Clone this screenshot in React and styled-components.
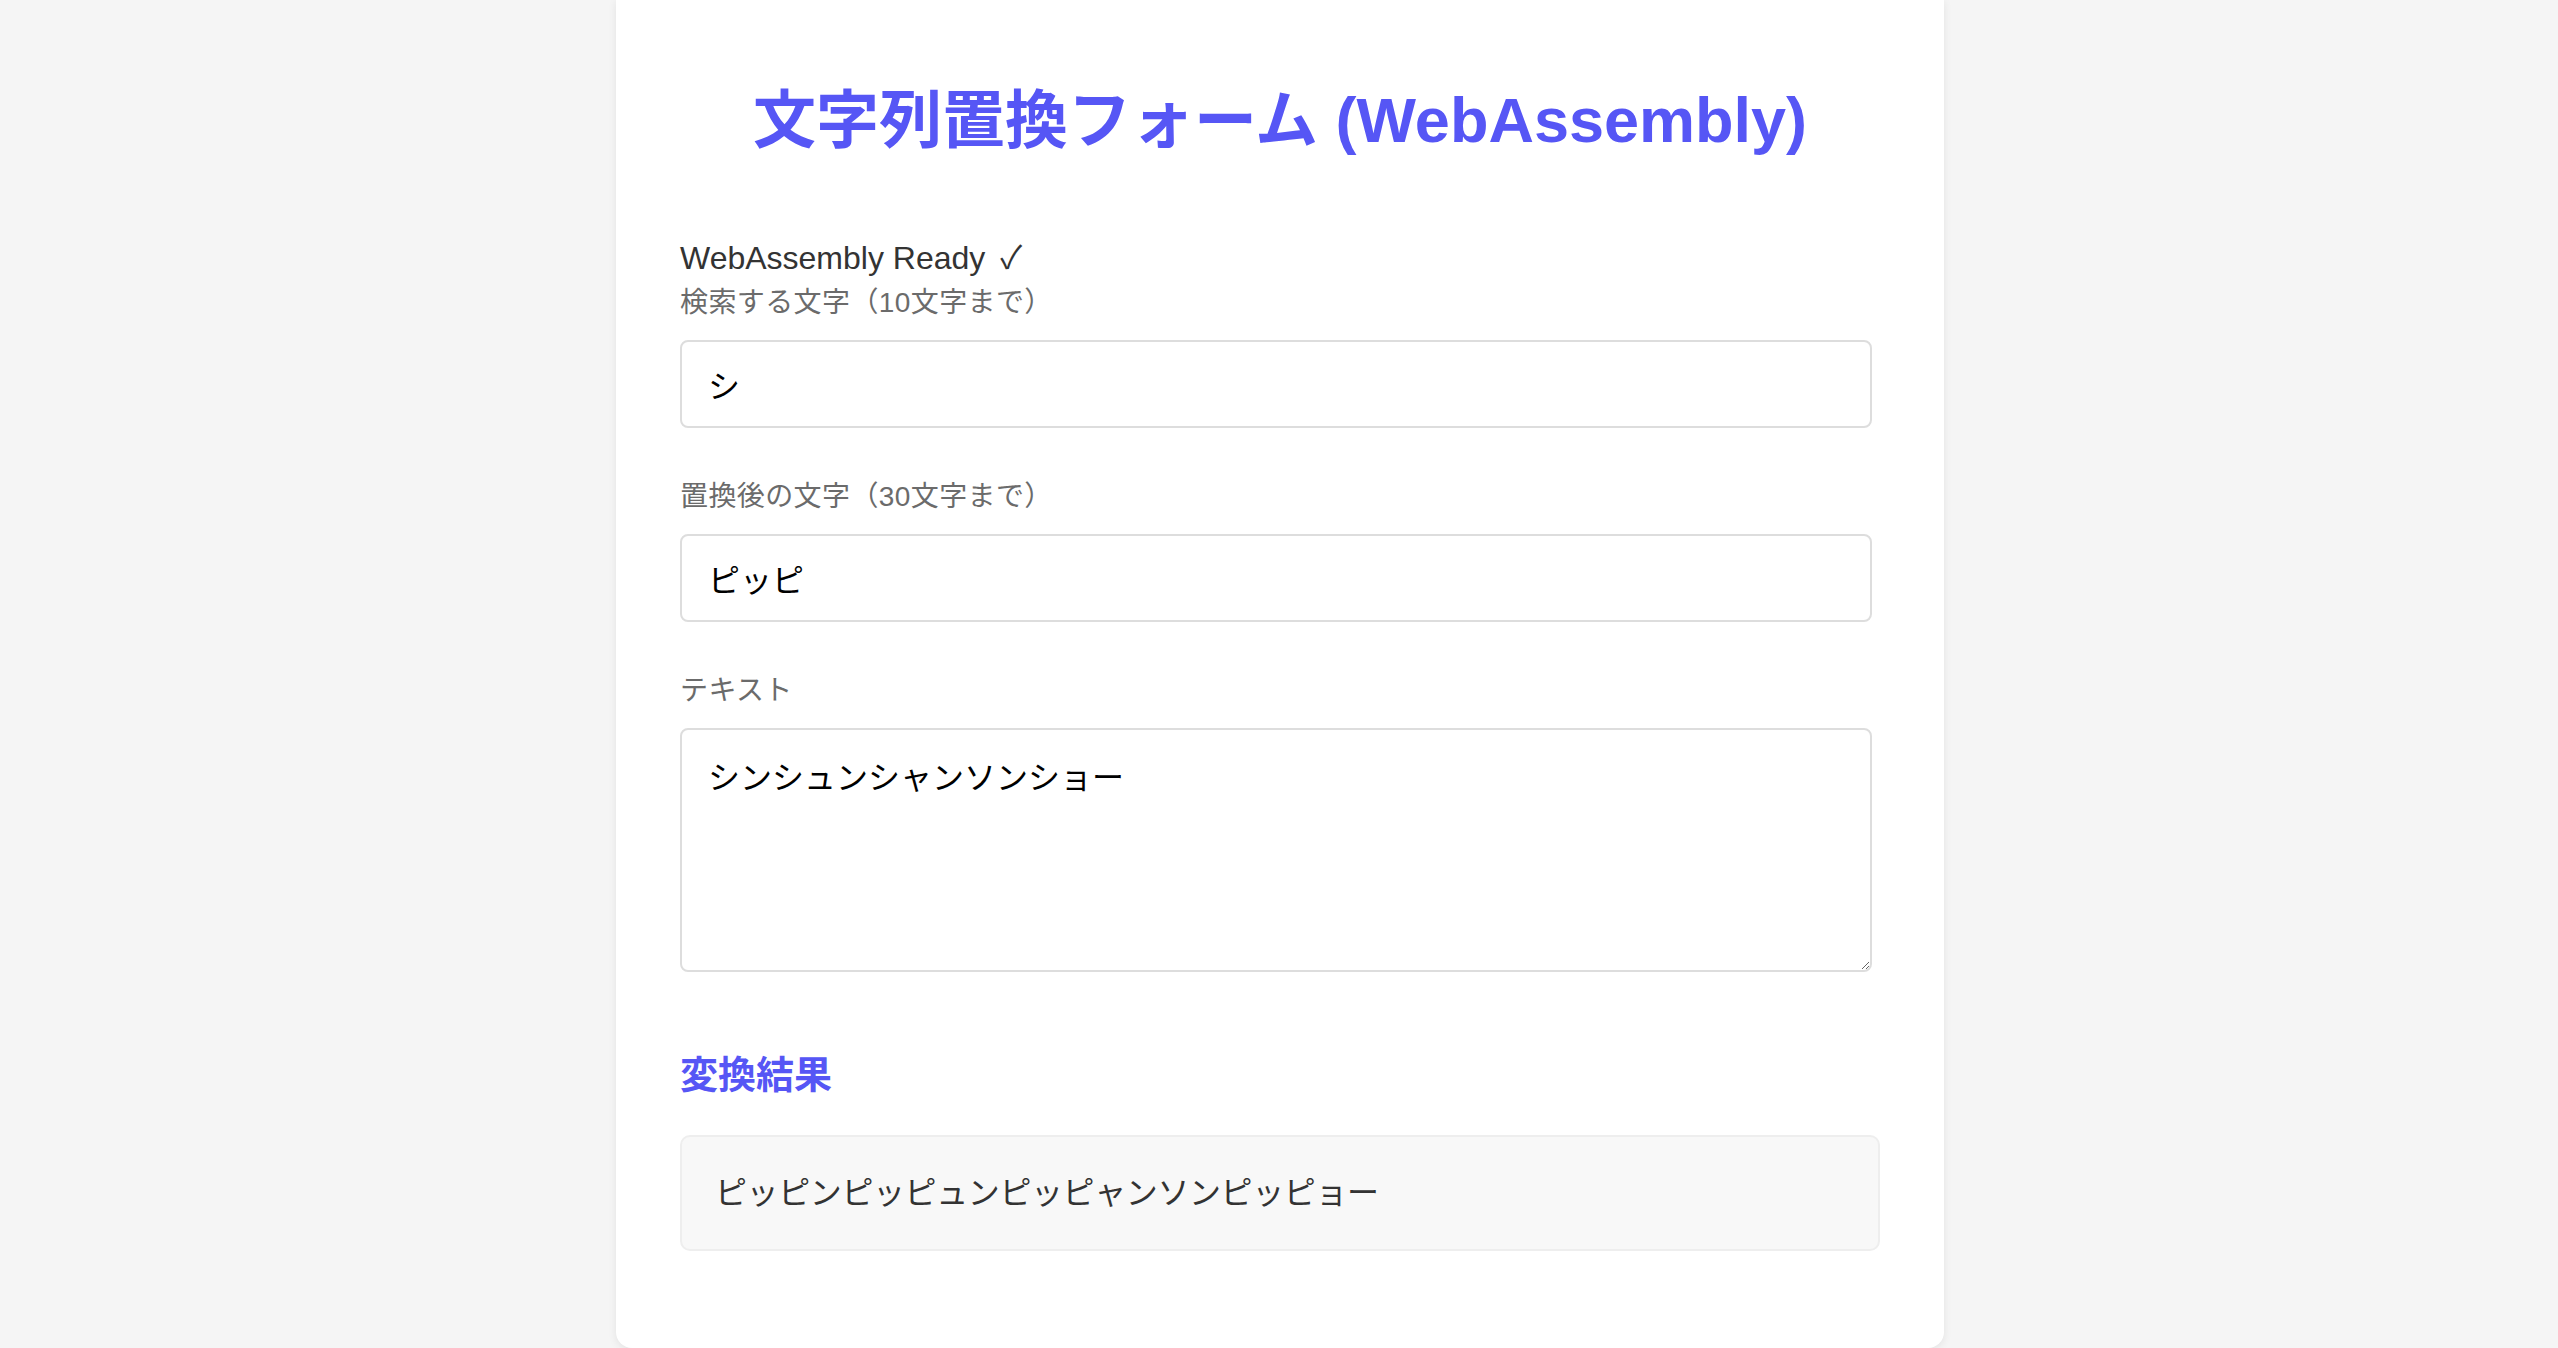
import React, { useState } from "react";
import styled, { createGlobalStyle } from "styled-components";

const GlobalStyle = createGlobalStyle`
  html, body {
    margin: 0;
    padding: 0;
    background: #f5f5f5;
  }

  body {
    font-family: "Liberation Sans", "Noto Sans CJK JP", sans-serif;
    line-height: 1.5;
    color: #333333;
  }
`;

export default function App() {
  const [search, setSearch] = useState("シ");
  const [replace, setReplace] = useState("ピッピ");
  const [text, setText] = useState("シンシュンシャンソンショー");

  const result = search ? text.split(search).join(replace) : text;

  return (
    <>
      <GlobalStyle />
      <Page>
        <Card>
          <Title>文字列置換フォーム (WebAssembly)</Title>

          <Status>
            WebAssembly Ready <Check>✓</Check>
          </Status>

          <Group>
            <Label htmlFor="search">検索する文字（10文字まで）</Label>
            <Input
              id="search"
              maxLength={10}
              value={search}
              onChange={(e) => setSearch(e.target.value)}
            />
          </Group>

          <Group>
            <Label htmlFor="replace">置換後の文字（30文字まで）</Label>
            <Input
              id="replace"
              maxLength={30}
              value={replace}
              onChange={(e) => setReplace(e.target.value)}
            />
          </Group>

          <Group $last>
            <Label htmlFor="text">テキスト</Label>
            <TextArea
              id="text"
              value={text}
              onChange={(e) => setText(e.target.value)}
            />
          </Group>

          <ResultTitle>変換結果</ResultTitle>
          <ResultBox>{result}</ResultBox>
        </Card>
      </Page>
    </>
  );
}

const Page = styled.div`
  display: flex;
  justify-content: center;
  min-height: 100vh;
  padding-left: 2px;
`;

const Card = styled.div`
  box-sizing: border-box;
  width: 1328px;
  padding: 72px 64px 96px;
  background: #ffffff;
  border-radius: 0 0 16px 16px;
  box-shadow: 0 2px 8px rgba(0, 0, 0, 0.08);
`;

const Title = styled.h1`
  margin: 0 0 66px;
  font-size: 63px;
  font-weight: 700;
  line-height: 96px;
  text-align: center;
  color: #5656f5;
`;

const Status = styled.div`
  font-size: 32px;
  line-height: 48px;
  color: #333333;
`;

const Check = styled.span`
  margin-left: 6px;
`;

const Group = styled.div`
  margin-bottom: ${(p) => (p.$last ? "0" : "48px")};
`;

const Label = styled.label`
  display: block;
  margin-bottom: 16px;
  font-size: 28px;
  line-height: 42px;
  letter-spacing: 0.4px;
  color: #6b6b6b;
`;

const fieldBase = `
  box-sizing: border-box;
  display: block;
  width: calc(100% - 8px);
  border: 2px solid #dddddd;
  border-radius: 8px;
  font-family: "Liberation Sans", "Noto Sans CJK JP", sans-serif;
  font-size: 32px;
  color: #000000;
  background: #ffffff;
  outline: none;
`;

const Input = styled.input`
  ${fieldBase}
  height: 88px;
  padding: 0 26px;
`;

const TextArea = styled.textarea`
  ${fieldBase}
  height: 244px;
  padding: 24px 26px;
  line-height: 1.5;
`;

const ResultTitle = styled.h2`
  margin: 74px 0 31px;
  font-size: 38px;
  font-weight: 700;
  line-height: 58px;
  color: #5656f5;
`;

const ResultBox = styled.div`
  box-sizing: border-box;
  padding: 32px 33px;
  border: 2px solid #eeeeee;
  border-radius: 10px;
  background: #f8f8f8;
  font-size: 32px;
  line-height: 48px;
  letter-spacing: -0.4px;
  color: #333333;
`;
